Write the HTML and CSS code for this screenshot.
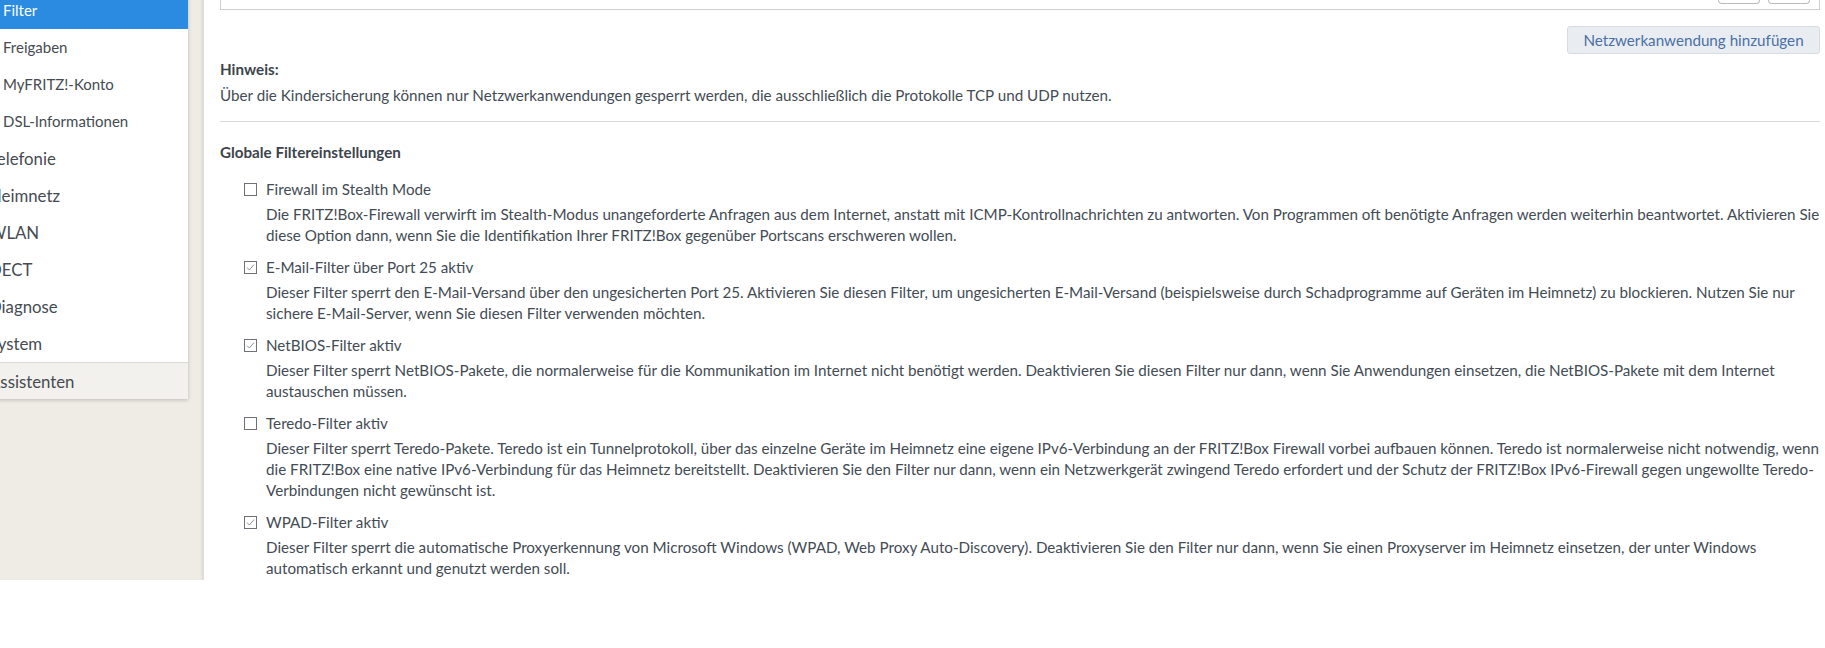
FILE: index.html
```html
<!DOCTYPE html>
<html lang="de">
<head>
<meta charset="utf-8">
<title>Filter</title>
<link rel="stylesheet" href="styles.css">
</head>
<body>
<div class="page">
  <aside class="sidebar">
    <nav class="menu">
      <ul class="menu-list">
        <li class="item sub active">Filter</li>
        <li class="item sub">Freigaben</li>
        <li class="item sub">MyFRITZ!-Konto</li>
        <li class="item sub">DSL-Informationen</li>
        <li class="item top">Telefonie</li>
        <li class="item top">Heimnetz</li>
        <li class="item top">WLAN</li>
        <li class="item top">DECT</li>
        <li class="item top">Diagnose</li>
        <li class="item top">System</li>
      </ul>
      <div class="item top assist">Assistenten</div>
    </nav>
  </aside>
  <main class="content">
    <div class="table-box">
      <span class="mini-btn"></span>
      <span class="mini-btn"></span>
    </div>
    <div class="btn-row">
      <button class="btn" type="button">Netzwerkanwendung hinzufügen</button>
    </div>
    <h4 class="note-title">Hinweis:</h4>
    <p class="note-text">Über die Kindersicherung können nur Netzwerkanwendungen gesperrt werden, die ausschließlich die Protokolle TCP und UDP nutzen.</p>
    <hr class="sep">
    <h4 class="section-title">Globale Filtereinstellungen</h4>
    <div class="options">
      <div class="option">
        <label class="opt-label"><span class="cb"></span>Firewall im Stealth Mode</label>
        <p class="opt-desc">Die FRITZ!Box-Firewall verwirft im Stealth-Modus unangeforderte Anfragen aus dem Internet, anstatt mit ICMP-Kontrollnachrichten zu antworten. Von Programmen oft benötigte Anfragen werden weiterhin beantwortet. Aktivieren Sie<br>diese Option dann, wenn Sie die Identifikation Ihrer FRITZ!Box gegenüber Portscans erschweren wollen.</p>
      </div>
      <div class="option">
        <label class="opt-label"><span class="cb checked"><svg viewBox="0 0 11 11" width="11" height="11"><path d="M2 5.6 L4.4 8 L9 2.6" fill="none" stroke="#8a8f94" stroke-width="1"/></svg></span>E-Mail-Filter über Port 25 aktiv</label>
        <p class="opt-desc">Dieser Filter sperrt den E-Mail-Versand über den ungesicherten Port 25. Aktivieren Sie diesen Filter, um ungesicherten E-Mail-Versand (beispielsweise durch Schadprogramme auf Geräten im Heimnetz) zu blockieren. Nutzen Sie nur<br>sichere E-Mail-Server, wenn Sie diesen Filter verwenden möchten.</p>
      </div>
      <div class="option">
        <label class="opt-label"><span class="cb checked"><svg viewBox="0 0 11 11" width="11" height="11"><path d="M2 5.6 L4.4 8 L9 2.6" fill="none" stroke="#8a8f94" stroke-width="1"/></svg></span>NetBIOS-Filter aktiv</label>
        <p class="opt-desc">Dieser Filter sperrt NetBIOS-Pakete, die normalerweise für die Kommunikation im Internet nicht benötigt werden. Deaktivieren Sie diesen Filter nur dann, wenn Sie Anwendungen einsetzen, die NetBIOS-Pakete mit dem Internet<br>austauschen müssen.</p>
      </div>
      <div class="option">
        <label class="opt-label"><span class="cb"></span>Teredo-Filter aktiv</label>
        <p class="opt-desc">Dieser Filter sperrt Teredo-Pakete. Teredo ist ein Tunnelprotokoll, über das einzelne Geräte im Heimnetz eine eigene IPv6-Verbindung an der FRITZ!Box Firewall vorbei aufbauen können. Teredo ist normalerweise nicht notwendig, wenn<br>die FRITZ!Box eine native IPv6-Verbindung für das Heimnetz bereitstellt. Deaktivieren Sie den Filter nur dann, wenn ein Netzwerkgerät zwingend Teredo erfordert und der Schutz der FRITZ!Box IPv6-Firewall gegen ungewollte Teredo-<br>Verbindungen nicht gewünscht ist.</p>
      </div>
      <div class="option">
        <label class="opt-label"><span class="cb checked"><svg viewBox="0 0 11 11" width="11" height="11"><path d="M2 5.6 L4.4 8 L9 2.6" fill="none" stroke="#8a8f94" stroke-width="1"/></svg></span>WPAD-Filter aktiv</label>
        <p class="opt-desc">Dieser Filter sperrt die automatische Proxyerkennung von Microsoft Windows (WPAD, Web Proxy Auto-Discovery). Deaktivieren Sie den Filter nur dann, wenn Sie einen Proxyserver im Heimnetz einsetzen, der unter Windows<br>automatisch erkannt und genutzt werden soll.</p>
      </div>
    </div>
  </main>
</div>
</body>
</html>
```
FILE: styles.css
```css
* { box-sizing: border-box; }
html, body { margin: 0; padding: 0; background: #fff; }
body {
  font-family: Lato, "Noto Sans", sans-serif;
  font-size: 15.2px;
  color: #434b54;
  overflow: hidden;
}
.page {
  display: flex;
  height: 580px;
  overflow: hidden;
}
.sidebar {
  width: 204px;
  flex: none;
  background: #efece6;
  border-right: 1px solid #e2ded6;
  box-shadow: inset -3px 0 3px -2px rgba(0,0,0,0.10);
}
.menu {
  width: 204px;
  margin-left: -16px;
  margin-top: -8px;
  background: #fff;
  box-shadow: 0 1px 4px rgba(0,0,0,0.22);
}
.menu-list { list-style: none; margin: 0; padding: 0; }
.item {
  height: 37px;
  line-height: 37px;
  white-space: nowrap;
  color: #464b51;
}
.item.top { padding-left: 5px; font-size: 16.8px; }
.item.sub { padding-left: 19px; font-size: 15px; }
.item.active { background: #2a8be0; color: #fff; }
.assist {
  background: #f3f1ed;
  border-top: 1px solid #dcd9d3;
  height: 37px;
}
.content {
  flex: 1;
  background: #fff;
  padding: 0 5px 0 16px;
  line-height: 21px;
}
.table-box {
  height: 10px;
  border: 1px solid #cfcfcf;
  border-top: 0;
  display: flex;
  justify-content: flex-end;
  align-items: flex-start;
  gap: 8px;
  padding-right: 9px;
}
.mini-btn {
  width: 42px;
  height: 4px;
  border: 1px solid #b8bcc0;
  border-top: 0;
  border-radius: 0 0 5px 5px;
  background: #fff;
}
.btn-row {
  display: flex;
  justify-content: flex-end;
  margin-top: 16px;
}
.btn {
  height: 28px;
  width: 253px;
  padding: 0;
  background: #e9edf1;
  border: 1px solid #d6dce2;
  border-radius: 3px;
  font-family: inherit;
  font-size: 15.2px;
  color: #4a70a6;
}
.note-title, .section-title {
  margin: 0;
  font-size: 15.2px;
  font-weight: bold;
  color: #3d444b;
}
.note-title { margin-top: 5px; }
.note-text { margin: 5px 0 0; }
.sep {
  margin: 15px 0 0;
  border: 0;
  border-top: 1px solid #d9d9d9;
  height: 0;
}
.section-title { margin-top: 20px; }
.options { margin-top: 16px; padding-left: 24px; }
.option { margin-bottom: 11px; }
.opt-label {
  display: flex;
  align-items: center;
  gap: 9px;
  height: 21px;
}
.cb {
  width: 13px;
  height: 13px;
  border: 1px solid #6e7277;
  background: #fff;
  flex: none;
  display: flex;
  align-items: center;
  justify-content: center;
}
.opt-desc {
  margin: 4px 0 0 22px;
}
```
